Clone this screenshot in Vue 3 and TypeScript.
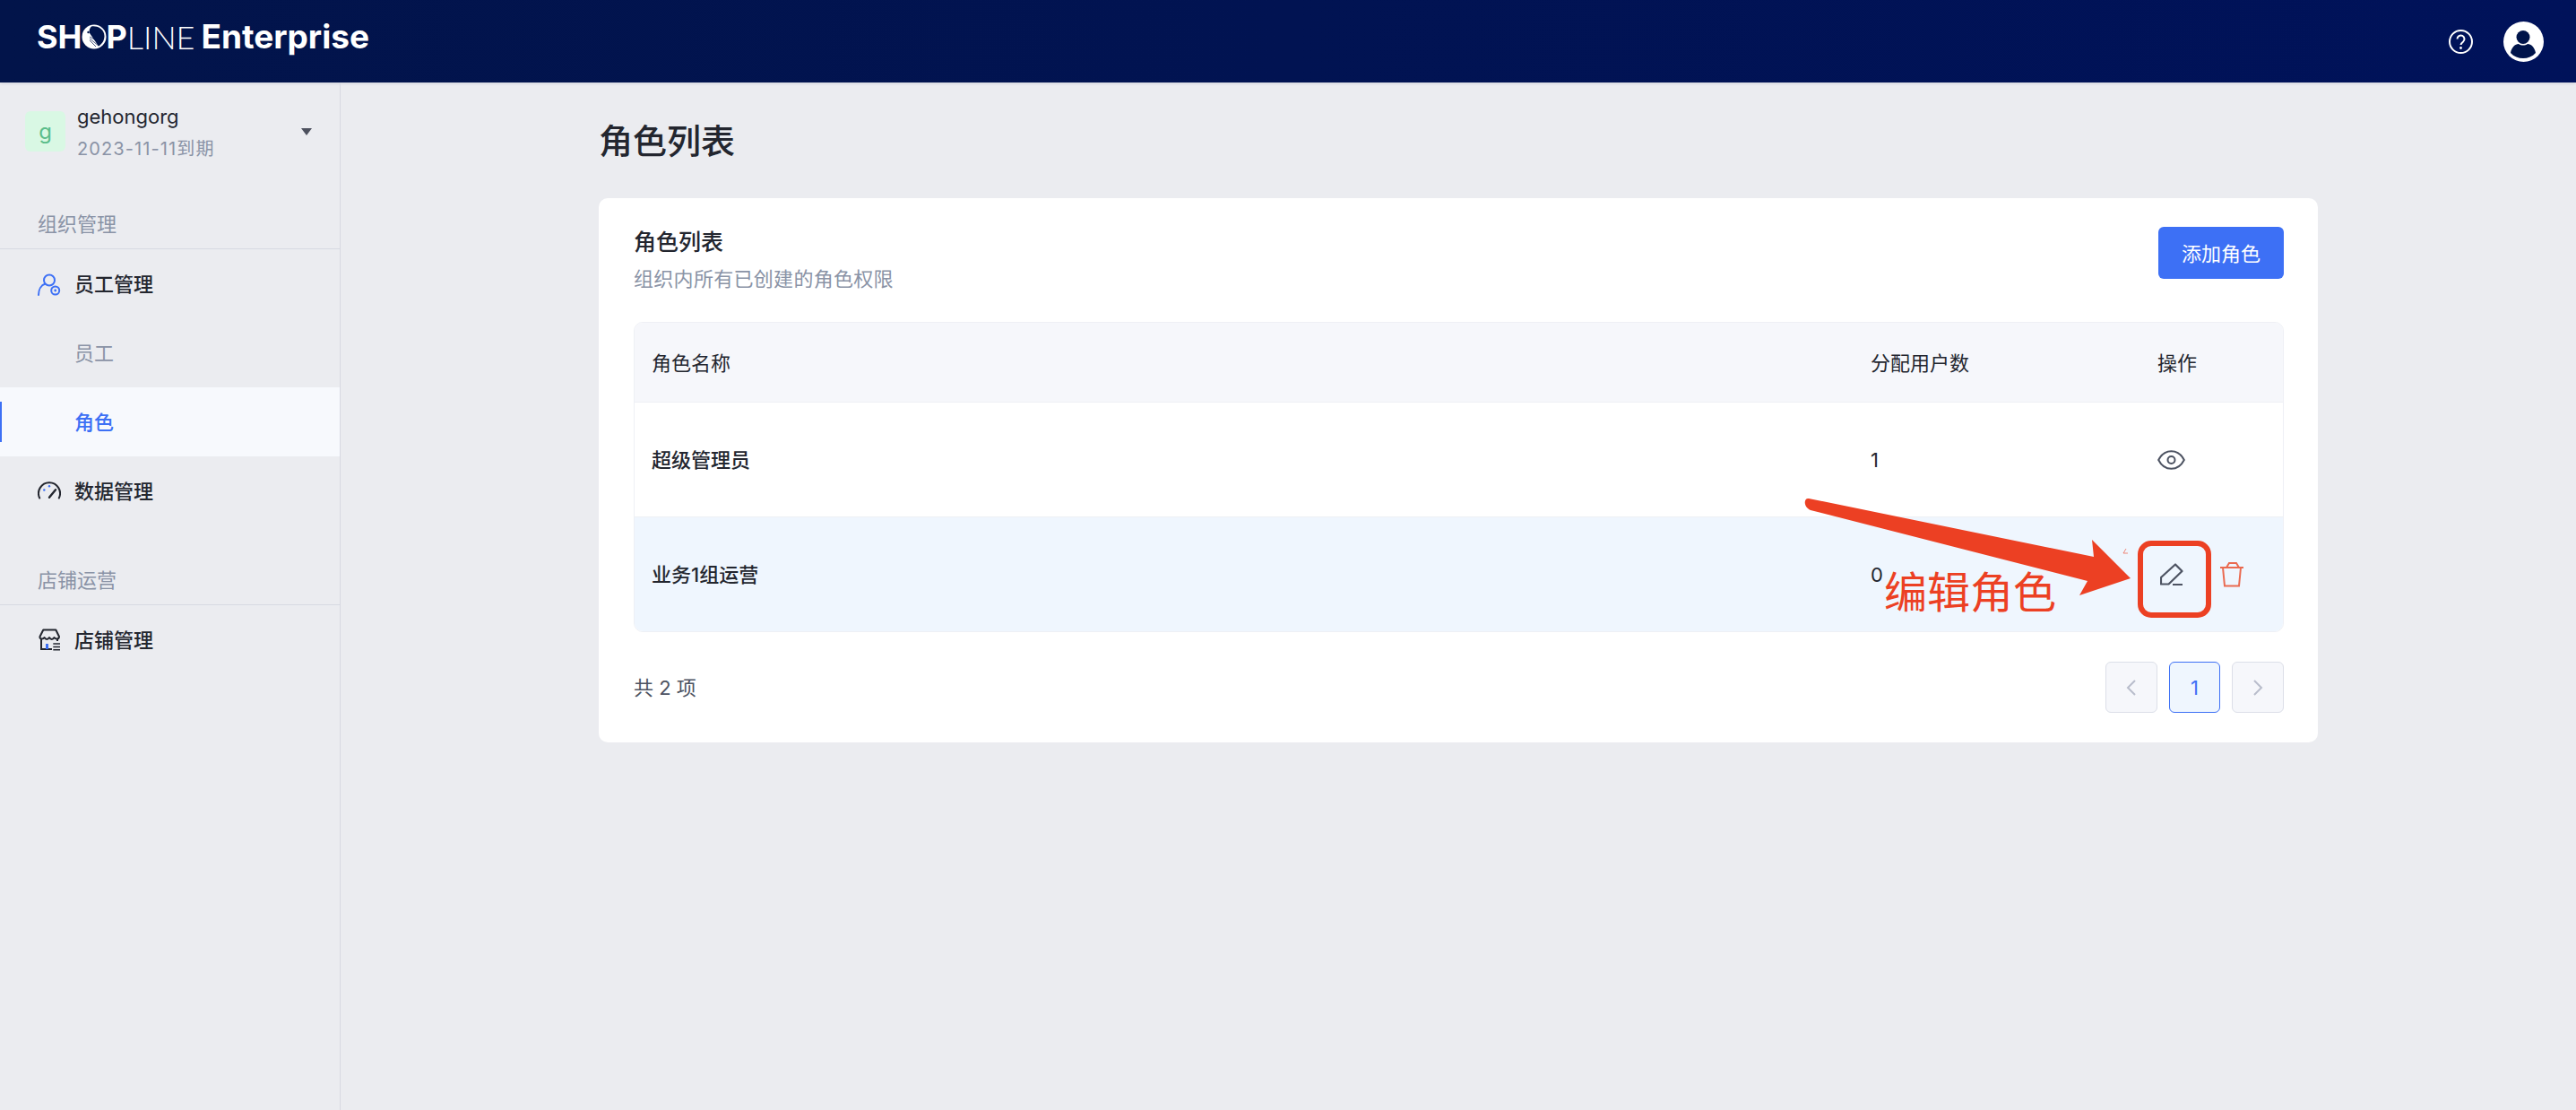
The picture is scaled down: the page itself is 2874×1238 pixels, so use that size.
<template>
  <div class="page">
    <header class="topbar">
      <div class="logo">
        <span class="logo-bold">SH</span>
        <svg class="logo-o" viewBox="0 0 28 28" width="28" height="28">
          <circle cx="14" cy="14" r="13.500" fill="#fff" />
          <path d="M11 2.500C16 1.500 25 4 25.500 13 25.500 18 23 22 19 24.500L9 10C8 7 9 4 11 2.500z" fill="#00144a" />
          <path d="M9 14l13 7M9 16l10 8M9 18l7 7" stroke="#00144a" stroke-width="0.7" fill="none" />
          <circle cx="7.500" cy="9" r="1.200" fill="#00144a" />
        </svg>
        <span class="logo-bold">P</span>
        <span class="logo-thin">LINE</span>
        <span class="logo-ent">Enterprise</span>
      </div>
      <div class="topbar-right">
        <svg viewBox="0 0 27 27" width="27" height="27">
          <circle cx="13.500" cy="13.500" r="12.500" fill="none" stroke="#fff" stroke-width="2" />
          <path d="M9.500 10.500a4 4 0 1 1 6.400 3.200c-1.500 1.100-2.400 1.800-2.400 3.400" fill="none" stroke="#fff" stroke-width="2" />
          <circle cx="13.500" cy="20.500" r="1.400" fill="#fff" />
        </svg>
        <svg viewBox="0 0 45 45" width="45" height="45">
          <circle cx="22.500" cy="22.500" r="22.500" fill="#fff" />
          <circle cx="22" cy="17.500" r="7.500" fill="#00144a" />
          <path d="M8 35c1-6 5-10 9-10 3 2 7 2 10 0 4 0 8 4 9 10-7 8-21 8-28 0z" fill="#00144a" />
        </svg>
      </div>
    </header>

    <div class="body">
      <aside class="sidebar">
        <div class="org">
          <span class="org-avatar">g</span>
          <div class="org-info">
            <div class="org-name">gehongorg</div>
            <div class="org-date">2023-11-11到期</div>
          </div>
          <span class="org-caret" />
        </div>

        <div class="group-title first">组织管理</div>
        <div class="nav-item">
          <svg class="nav-icon" viewBox="0 0 26 26" width="26" height="26">
            <circle cx="13" cy="8.500" r="6" fill="none" stroke="#3d70f5" stroke-width="2" />
            <path d="M1 25c0-6 3-11 7.500-12.500" fill="none" stroke="#3d70f5" stroke-width="2" stroke-linecap="round" />
            <circle cx="19.700" cy="20" r="4.500" fill="none" stroke="#3d70f5" stroke-width="2" />
            <circle cx="19.700" cy="20" r="1.400" fill="#3d70f5" />
          </svg>
          <span>员工管理</span>
        </div>
        <div class="nav-sub">员工</div>
        <div class="nav-sub active">角色</div>
        <div class="nav-item">
          <svg class="nav-icon" viewBox="0 0 26 26" width="26" height="26">
            <path d="M2.200 20.500a12 12 0 1 1 21.600 0" fill="none" stroke="#23262f" stroke-width="2" stroke-linecap="round" />
            <path d="M13 19.800l7-8.500" stroke="#23262f" stroke-width="2.400" stroke-linecap="round" />
            <circle cx="7.300" cy="11.500" r="1.200" fill="#3d70f5" />
            <circle cx="13" cy="7.200" r="1.200" fill="#3d70f5" />
          </svg>
          <span>数据管理</span>
        </div>

        <div class="group-title second">店铺运营</div>
        <div class="nav-item">
          <svg class="nav-icon" viewBox="0 0 26 26" width="26" height="26">
            <path d="M6.300 1.500h14L24 9c0 3-4 3.500-5.500 1-1.500 2.500-4 2.500-5.500 0-1.500 2.500-4 2.500-5.500 0C6 12.500 2 12 2.500 9z" fill="none" stroke="#23262f" stroke-width="2" stroke-linejoin="round" />
            <path d="M4 11v12h12M22 11v3" fill="none" stroke="#23262f" stroke-width="2" />
            <path d="M9 17h3v6H9z" fill="#3d70f5" />
            <path d="M17.300 17h7.700M17.300 20.500h7.700M17.300 23.700h7.700" stroke="#23262f" stroke-width="1.500" />
          </svg>
          <span>店铺管理</span>
        </div>
      </aside>

      <main class="main">
        <h1 class="page-title">角色列表</h1>
        <section class="card">
          <div class="card-head">
            <div>
              <h2 class="card-title">角色列表</h2>
              <p class="card-sub">组织内所有已创建的角色权限</p>
            </div>
            <button type="button" class="add-btn">添加角色</button>
          </div>

          <div class="table">
            <div class="row head">
              <span>角色名称</span>
              <span>分配用户数</span>
              <span>操作</span>
            </div>
            <div v-for="role in roles" :key="role.name" class="row" :class="{ hovered: role.editable }">
              <span class="role-name">{{ role.name }}</span>
              <span class="count">{{ role.count }}</span>
              <span class="actions">
                <template v-if="role.editable">
                  <svg class="pencil" viewBox="0 0 26 25" width="26" height="25">
                    <path d="M1 23.500V16L17 1.500 24.500 9 9.500 23.500z" fill="none" stroke="#4d5362" stroke-width="2.200" stroke-linejoin="round" />
                    <path d="M14 24h11" stroke="#4d5362" stroke-width="2.200" />
                  </svg>
                  <svg viewBox="0 0 26 28" width="26" height="28">
                    <path d="M0 6h26M7 6l3-5h8l3 5" fill="none" stroke="#ea6a50" stroke-width="2" />
                    <path d="M3 6l2 20.500h16L23 6" fill="none" stroke="#ea6a50" stroke-width="2" />
                  </svg>
                </template>
                <svg v-else viewBox="0 0 31 22" width="31" height="22">
                  <path d="M1.200 11C4.500 4.500 9.500 1.200 15.500 1.200S26.500 4.500 29.800 11C26.500 17.500 21.500 20.800 15.500 20.800S4.500 17.500 1.200 11z" fill="none" stroke="#4d5362" stroke-width="2" />
                  <circle cx="15.500" cy="11" r="4" fill="none" stroke="#4d5362" stroke-width="2" />
                </svg>
              </span>
            </div>
          </div>

          <div class="card-foot">
            <span class="total">共 2 项</span>
            <div class="pager">
              <button type="button" class="page-btn">
                <svg viewBox="0 0 12 20" width="12" height="20"><path d="M10 2l-8 8 8 8" fill="none" stroke="#b9bdcb" stroke-width="2" /></svg>
              </button>
              <button type="button" class="page-btn current">1</button>
              <button type="button" class="page-btn">
                <svg viewBox="0 0 12 20" width="12" height="20"><path d="M2 2l8 8-8 8" fill="none" stroke="#b9bdcb" stroke-width="2" /></svg>
              </button>
            </div>
          </div>
        </section>
      </main>
    </div>

    <svg class="mark" viewBox="0 0 2874 1238" width="2874" height="1238">
      <path d="M2018 556L2336 621L2334 602L2377 645L2320 664L2329 648L2020 569C2012 566 2012 555 2018 556z" fill="#ec4023" />
      <rect x="2388" y="606" width="76" height="80" rx="12" fill="none" stroke="#ec4023" stroke-width="6" />
      <path d="M2372 612l-3 5h5" fill="none" stroke="#ec4023" stroke-width="1" opacity="0.6" />
    </svg>
    <span class="mark-text">编辑角色</span>
  </div>
</template>

<script setup lang="ts">
const roles = [
  { name: '超级管理员', count: 1, editable: false },
  { name: '业务1组运营', count: 0, editable: true },
]
</script>

<style>
html,
body {
  margin: 0;
  background: #ebecf0;
}
</style>

<style scoped>
.page {
  position: relative;
  display: flex;
  flex-direction: column;
  height: 1238px;
  overflow: hidden;
  background: #ebecf0;
  color: #23262f;
  font-family: Inter, "Noto Sans CJK SC", sans-serif;
  font-size: 22px;
}

.topbar {
  display: flex;
  flex: none;
  align-items: center;
  justify-content: space-between;
  height: 92px;
  padding: 0 36px 0 41px;
  box-sizing: border-box;
  background: linear-gradient(90deg, #02144a 0%, #00125a 100%);
  box-shadow: 0 1px 3px rgba(0, 20, 74, 0.12);
}

.logo {
  display: flex;
  align-items: center;
  margin-top: -10px;
  color: #fff;
  font-size: 36px;
  line-height: 44px;
}

.logo-bold {
  font-weight: 700;
}

.logo-o {
  margin-right: -1px;
}

.logo-thin {
  font-family: Lato, sans-serif;
  font-weight: 300;
}

.logo-ent {
  margin-left: 7px;
  font-size: 37px;
  font-weight: 700;
}

.topbar-right {
  display: flex;
  align-items: center;
  gap: 34px;
}

.body {
  display: flex;
  flex: 1;
  min-height: 0;
}

.sidebar {
  flex: none;
  width: 380px;
  box-sizing: border-box;
  border-right: 1px solid #d7d9e2;
}

.org {
  display: flex;
  align-items: center;
  height: 106px;
  box-sizing: border-box;
  padding: 3px 31px 0 28px;
}

.org-avatar {
  display: flex;
  flex: none;
  align-items: center;
  justify-content: center;
  width: 45px;
  height: 45px;
  margin-right: 13px;
  border-radius: 6px;
  background: #d9f8e4;
  color: #5bbd8a;
  font-size: 24px;
}

.org-info {
  flex: 1;
  padding-top: 2px;
}

.org-name {
  line-height: 30px;
}

.org-date {
  margin-top: 6px;
  color: #8a93a6;
  font-size: 20px;
  letter-spacing: 1.100px;
  line-height: 30px;
}

.org-caret {
  width: 0;
  height: 0;
  border-top: 8px solid #4d515e;
  border-right: 6px solid transparent;
  border-left: 6px solid transparent;
}

.group-title {
  height: 56px;
  padding: 13px 0 0 42px;
  box-sizing: border-box;
  border-bottom: 1px solid #d7d9e2;
  color: #8a93a6;
  line-height: 30px;
}

.group-title.first {
  margin-top: 24px;
}

.group-title.second {
  margin-top: 33px;
}

.nav-item {
  display: flex;
  align-items: center;
  gap: 15px;
  height: 77px;
  padding-left: 42px;
  font-weight: 500;
  line-height: 30px;
}

.nav-icon {
  flex: none;
}

.nav-sub {
  height: 77px;
  padding-left: 83px;
  color: #8a93a6;
  line-height: 79px;
}

.nav-sub.active {
  position: relative;
  background: #f7f9fd;
  color: #3d70f5;
  font-weight: 500;
}

.nav-sub.active::before {
  content: "";
  position: absolute;
  top: 16px;
  left: 0;
  width: 2px;
  height: 45px;
  background: #3d70f5;
}

.main {
  flex: 1;
  padding: 0 288px;
}

.page-title {
  margin: 0;
  padding-top: 36px;
  height: 129px;
  box-sizing: border-box;
  font-size: 38px;
  font-weight: 500;
  line-height: 58px;
}

.card {
  box-sizing: border-box;
  width: 1918px;
  padding: 32px 38px 33px 39px;
  border-radius: 10px;
  background: #fff;
}

.card-head {
  display: flex;
  align-items: flex-start;
  justify-content: space-between;
  height: 106px;
}

.card-title {
  margin: 0;
  font-size: 25px;
  font-weight: 500;
  line-height: 34px;
}

.card-sub {
  margin: 9px 0 0;
  color: #8a93a6;
  letter-spacing: 0.300px;
  line-height: 30px;
}

.add-btn {
  width: 140px;
  height: 58px;
  padding: 0 0 2px;
  border: 0;
  border-radius: 6px;
  background: #3d70f5;
  color: #fff;
  font: inherit;
}

.table {
  overflow: hidden;
  border: 1px solid #eef0f5;
  border-radius: 10px;
}

.row {
  display: grid;
  grid-template-columns: 1379px 320px 1fr;
  align-items: center;
  height: 128px;
  box-sizing: border-box;
  border-top: 1px solid #eef0f5;
}

.row > span:first-child {
  padding-left: 19px;
}

.role-name {
  padding-bottom: 4px;
  font-weight: 500;
}

.row.head {
  height: 88px;
  padding-bottom: 2px;
  border-top: 0;
  background: #f6f7fb;
}

.row.hovered {
  background: #eff6fe;
}

.actions {
  display: flex;
  align-items: center;
  gap: 41px;
}

.pencil {
  margin-left: 3px;
}

.card-foot {
  display: flex;
  align-items: center;
  justify-content: space-between;
  margin-top: 33px;
}

.total {
  padding-bottom: 4px;
  color: #4d5362;
}

.pager {
  display: flex;
  gap: 13px;
}

.page-btn {
  display: flex;
  align-items: center;
  justify-content: center;
  width: 58px;
  height: 57px;
  box-sizing: border-box;
  padding: 0;
  border: 1px solid #dcdfe8;
  border-radius: 6px;
  background: #f6f7fb;
  font: inherit;
}

.page-btn.current {
  width: 57px;
  border-color: #3d70f5;
  background: #eff6fe;
  color: #3d70f5;
}

.mark {
  position: absolute;
  top: 0;
  left: 0;
  pointer-events: none;
}

.mark-text {
  position: absolute;
  top: 627px;
  left: 2102px;
  color: #ec4023;
  font-size: 48px;
  line-height: 68px;
}
</style>
